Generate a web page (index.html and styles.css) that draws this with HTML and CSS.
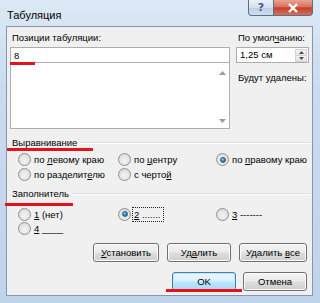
FILE: index.html
```html
<!DOCTYPE html>
<html lang="ru">
<head>
<meta charset="utf-8">
<title>Табуляция</title>
<link rel="stylesheet" href="styles.css">
</head>
<body>
<div class="window">
  <div class="titlebar">
    <span class="title">Табуляция</span>
    <div class="caption">
      <div class="cap help">?</div>
      <div class="cap close">
        <svg width="12" height="10" viewBox="0 0 12 10"><path d="M2 1 L10 9 M10 1 L2 9" stroke="#fff" stroke-width="2.4" fill="none"/></svg>
      </div>
    </div>
  </div>
  <div class="client">
    <div class="top">
      <div class="leftcol">
        <div class="lbl">Позиции табуляции:</div>
        <div class="input">8</div>
        <div class="list">
          <div class="sb">
            <svg width="7" height="4" viewBox="0 0 7 4"><path d="M0 4 L3.5 0 L7 4Z" fill="#9a9a9a"/></svg>
            <svg width="7" height="4" viewBox="0 0 7 4"><path d="M0 0 L3.5 4 L7 0Z" fill="#9a9a9a"/></svg>
          </div>
        </div>
      </div>
      <div class="rightcol">
        <div class="lbl">По умол<u>ч</u>анию:</div>
        <div class="spin">
          <span>1,25 см</span>
          <div class="spinbtns">
            <div class="sbtn"><svg width="5" height="3" viewBox="0 0 5 3"><path d="M0 3 L2.5 0 L5 3Z" fill="#4d4d4d"/></svg></div>
            <div class="sbtn"><svg width="5" height="3" viewBox="0 0 5 3"><path d="M0 0 L2.5 3 L5 0Z" fill="#4d4d4d"/></svg></div>
          </div>
        </div>
        <div class="lbl del">Будут удалены:</div>
      </div>
    </div>

    <div class="group"><span>Выравнивание</span><span class="rule"></span></div>
    <div class="radios align">
      <label class="opt"><span class="radio"></span><span>по <u>л</u>евому краю</span></label>
      <label class="opt"><span class="radio"></span><span>по <u>ц</u>ентру</span></label>
      <label class="opt"><span class="radio on"></span><span>по <u>п</u>равому краю</span></label>
      <label class="opt"><span class="radio"></span><span>по разделит<u>е</u>лю</span></label>
      <label class="opt"><span class="radio"></span><span>с черто<u>й</u></span></label>
    </div>

    <div class="group fill"><span>Заполнитель</span><span class="rule"></span></div>
    <div class="radios filler">
      <label class="opt"><span class="radio"></span><span><u>1</u> (нет)</span></label>
      <label class="opt"><span class="radio on"></span><span class="focus"><u>2</u> .......</span></label>
      <label class="opt"><span class="radio"></span><span><u>3</u> -------</span></label>
      <label class="opt"><span class="radio"></span><span><u>4</u> ____</span></label>
    </div>

    <div class="btnrow">
      <div class="btn w66"><span><u>У</u>становить</span></div>
      <div class="btn w64"><span>Уд<u>а</u>лить</span></div>
      <div class="btn w68"><span>Удалить <u>в</u>се</span></div>
    </div>
    <div class="btnrow ok">
      <div class="btn def w64"><span>OK</span></div>
      <div class="btn w64"><span>Отмена</span></div>
    </div>
  </div>
  <div class="mark m1"></div>
  <div class="mark m2"></div>
  <div class="mark m3"></div>
  <div class="mark m4"></div>
</div>
</body>
</html>
```
FILE: styles.css
```css
html, body {
  margin: 0;
  padding: 0;
  background: #c8d9ec;
}
.window {
  position: relative;
  width: 320px;
  height: 303px;
  box-sizing: border-box;
  display: flex;
  flex-direction: column;
  background: linear-gradient(180deg, #dce8f5 0%, #c9dbee 30%, #bfd3ea 100%);
  font-family: "Liberation Sans", Arial, sans-serif;
  font-size: 9.5px;
  color: #000;
  overflow: hidden;
}
.titlebar {
  height: 26px;
  flex: none;
  display: flex;
  align-items: flex-start;
  justify-content: space-between;
}
.title {
  font-size: 11px;
  padding: 9px 0 0 7px;
  color: #000;
}
.caption {
  display: flex;
  margin-right: 7px;
}
.cap {
  height: 16px;
  box-sizing: border-box;
  border: 1px solid #5d6e85;
  border-top: none;
  display: flex;
  align-items: center;
  justify-content: center;
}
.help {
  width: 25px;
  border-radius: 0 0 0 4px;
  border-right: none;
  background: linear-gradient(180deg, #eaf1f9 0%, #d3e0ef 50%, #bccee4 51%, #cfdfef 100%);
  color: #4a5a70;
  font-family: "DejaVu Sans", sans-serif;
  font-size: 11px;
  font-weight: bold;
}
.close {
  width: 40px;
  border-radius: 0 0 4px 0;
  background: linear-gradient(180deg, #e8a493 0%, #d7725f 45%, #c2412c 52%, #d5705a 100%);
}
.client {
  flex: 1;
  margin: 0 7px 7px 6px;
  background: #f0f0f0;
  border: 1px solid #8597ad;
  display: flex;
  flex-direction: column;
  padding: 4px 0 0 0;
}
.top {
  display: flex;
  gap: 6px;
  padding-left: 3px;
}
.leftcol {
  width: 220px;
}
.lbl {
  line-height: 13px;
  height: 13px;
  padding-left: 2px;
  white-space: nowrap;
}
.input {
  margin-top: 3px;
  height: 16px;
  box-sizing: border-box;
  border: 1px solid #abadb3;
  background: #fff;
  padding: 1px 0 0 3px;
  line-height: 13px;
}
.list {
  height: 66px;
  box-sizing: border-box;
  border: 1px solid #abadb3;
  border-top: none;
  background: #fff;
  display: flex;
  justify-content: flex-end;
}
.sb {
  width: 14px;
  display: flex;
  flex-direction: column;
  justify-content: space-between;
  align-items: center;
  padding: 8px 0 5px;
}
.rightcol {
  width: 73px;
}
.spin {
  margin-top: 3px;
  height: 16px;
  box-sizing: border-box;
  border: 1px solid #abadb3;
  background: #fff;
  display: flex;
  justify-content: space-between;
  padding-left: 3px;
  line-height: 14px;
}
.spinbtns {
  width: 12px;
  display: flex;
  flex-direction: column;
  margin: 1px 1px 1px 0;
}
.sbtn {
  flex: 1;
  display: flex;
  align-items: center;
  justify-content: center;
  background: linear-gradient(180deg, #f5f5f5, #e3e3e3);
  border: 1px solid #d4d4d4;
  margin-bottom: -1px;
}
.del {
  margin-top: 8px;
}
.group {
  margin-top: 7px;
  padding-left: 5px;
  line-height: 13px;
  height: 13px;
  display: flex;
  align-items: center;
  gap: 3px;
}
.group .rule {
  flex: 1;
  height: 0;
  border-top: 1px solid #d5dfe5;
  border-bottom: 1px solid #fff;
  margin-right: 1px;
}
.group.fill {
  margin-top: 5px;
}
.radios {
  margin-top: 3px;
  display: grid;
  grid-template-columns: 100px 98px auto;
  grid-auto-rows: 15px;
  padding-left: 11px;
}
.radios.filler {
  margin-top: 7px;
  grid-auto-rows: 14px;
}
.opt {
  display: flex;
  align-items: center;
  gap: 3px;
  white-space: nowrap;
}
.radio {
  width: 11px;
  height: 11px;
  border-radius: 50%;
  border: 1px solid #8f8f8f;
  background: radial-gradient(circle at 50% 60%, #f4f4f4 0%, #e2e2e2 60%, #d0d0d0 100%);
  display: flex;
  align-items: center;
  justify-content: center;
  flex: none;
}
.radio.on::after {
  content: "";
  width: 6px;
  height: 6px;
  border-radius: 50%;
  background: radial-gradient(circle at 40% 35%, #9cd4f5 0%, #3a8ac4 45%, #1b4f78 100%);
  border: 1px solid #2a5f88;
  box-sizing: border-box;
}
.focus {
  outline: 1px dotted #222;
  outline-offset: 1px;
  padding-right: 2px;
}
.btnrow {
  margin-top: 8px;
  display: flex;
  justify-content: flex-end;
  gap: 8px;
  padding-right: 5px;
}
.btnrow.ok {
  margin-top: 10px;
  gap: 7px;
}
.btn {
  height: 19px;
  box-sizing: border-box;
  border: 1px solid #707070;
  border-radius: 3px;
  background: linear-gradient(180deg, #f3f3f3 0%, #ebebeb 48%, #dddddd 52%, #cfcfcf 100%);
  box-shadow: inset 0 0 0 1px #fcfcfc;
  display: flex;
  align-items: center;
  justify-content: center;
  white-space: nowrap;
}
.btn.def {
  border-color: #3c7fb1;
  background: linear-gradient(180deg, #eaf6fd 0%, #d9f0fc 48%, #bee6fd 52%, #a7d9f5 100%);
  box-shadow: inset 0 0 0 1px #c4e4f7;
}
.w66 { width: 66px; }
.w68 { width: 68px; }
.w64 { width: 64px; }
.mark {
  position: absolute;
  height: 3px;
  background: #e3121b;
}
.m1 { left: 10px; top: 62px; width: 25px; }
.m2 { left: 7px; top: 148px; width: 86px; }
.m3 { left: 5px; top: 203px; width: 68px; }
.m4 { left: 166px; top: 289px; width: 76px; }
```
